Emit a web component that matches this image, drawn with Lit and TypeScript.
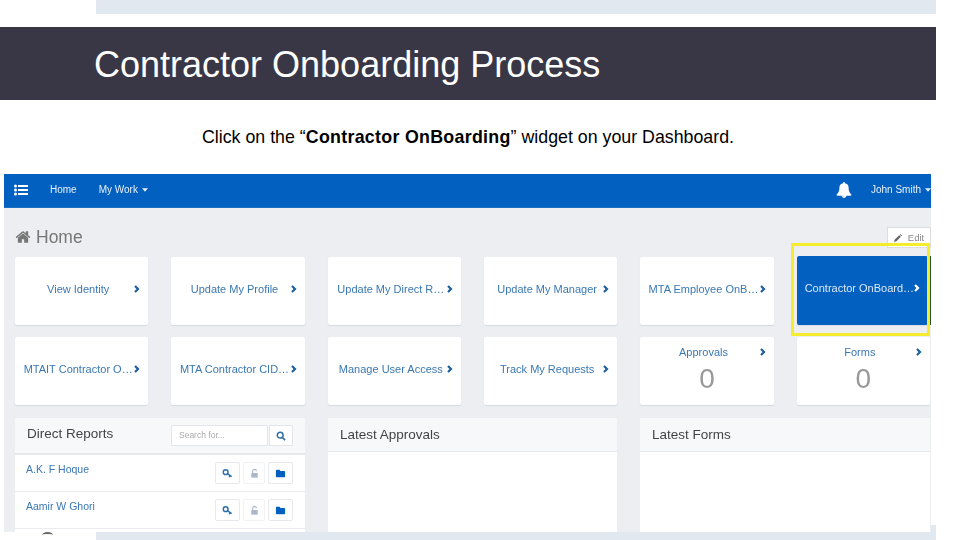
import { LitElement, html, css, svg } from "lit";
import { customElement } from "lit/decorators.js";

const HOME = "M1472 992v480q0 26-19 45t-45 19h-384v-384h-256v384h-384q-26 0-45-19t-19-45v-480q0-1 .5-3t.5-3l575-474 575 474q1 2 1 6zm223-69l-62 74q-8 9-21 11h-3q-13 0-21-7l-692-577-692 577q-12 8-24 7-13-2-21-11l-62-74q-8-10-7-23.5t11-21.5l719-599q32-26 76-26t76 26l244 204v-195q0-14 9-23t23-9h192q14 0 23 9t9 23v408l219 182q10 8 11 21.5t-7 23.5z";
const BELL = "M912 1696q0-16-16-16-59 0-101.5-42.5t-42.5-101.5q0-16-16-16t-16 16q0 73 51.5 124.5t124.5 51.5q16 0 16-16zm816-288q0 52-38 90t-90 38h-448q0 106-75 181t-181 75-181-75-75-181h-448q-52 0-90-38t-38-90q50-42 91-88t85-119.5 74.5-158.5 50-206 19.5-260q0-152 117-282.5t307-158.5q-8-19-8-39 0-40 28-68t68-28 68 28 28 68q0 20-8 39 190 28 307 158.5t117 282.5q0 139 19.5 260t50 206 74.5 158.5 85 119.5 91 88z";

const chevron = svg`<svg class="chev" viewBox="0 0 7 10"><path d="M2 2 L5 5 L2 8" fill="none" stroke="currentColor" stroke-width="2.2"/></svg>`;
const caret = svg`<svg class="caret" viewBox="0 0 7 4"><path d="M0 0 H7 L3.5 4 Z" fill="currentColor"/></svg>`;

const row1 = ["View Identity", "Update My Profile", "Update My Direct R…", "Update My Manager", "MTA Employee OnB…"];
const row2 = ["MTAIT Contractor O…", "MTA Contractor CID…", "Manage User Access", "Track My Requests"];
const reports = ["A.K. F Hoque", "Aamir W Ghori"];

@customElement("app-root")
export class AppRoot extends LitElement {
  static styles = css`
    :host {
      display: block;
      width: 960px;
      height: 540px;
      overflow: hidden;
      background: #fff;
      font-family: "Liberation Sans", Arial, sans-serif;
    }
    .strip-top {
      height: 14px;
      margin: 0 24px 13px 96px;
      background: #e2e8f0;
    }
    .title {
      width: 936px;
      height: 73px;
      box-sizing: border-box;
      padding-left: 94px;
      background: #393745;
      color: #fff;
      font-size: 36px;
      line-height: 76px;
    }
    .lead {
      width: 936px;
      margin-top: 26px;
      height: 22px;
      line-height: 22px;
      text-align: center;
      font-size: 17.8px;
      color: #000;
    }
    .lead b {
      letter-spacing: 0.3px;
    }
    .shot {
      position: relative;
      z-index: 1;
      width: 927px;
      height: 358px;
      margin: 26px 0 0 4px;
      overflow: hidden;
      background: #eceef2;
      font-family: "Liberation Sans", sans-serif;
      filter: blur(0.4px);
    }
    .strip-bottom {
      height: 15px;
      margin: -7px 24px 0 96px;
      background: #e2e8f0;
    }
    nav {
      display: flex;
      align-items: center;
      height: 34px;
      padding: 0 0 2px 10px;
      box-sizing: border-box;
      background: #0160c0;
      border-bottom: 1px solid #1a6fc4;
      color: #e8f0fa;
      font-size: 10px;
    }
    nav .list {
      width: 14px;
      height: 12px;
      margin-right: 22px;
    }
    nav .item {
      margin-right: 22px;
    }
    nav .spacer {
      flex: 1;
    }
    nav .bell {
      width: 16px;
      height: 16px;
      margin-right: 19px;
      fill: #fff;
    }
    .caret {
      width: 6px;
      height: 4px;
      margin-left: 4px;
      vertical-align: 1px;
    }
    .head {
      display: flex;
      justify-content: space-between;
      height: 49px;
      padding: 0 0 0 11px;
    }
    .head h1 {
      margin: 19px 0 0;
      display: flex;
      align-items: center;
      height: 20px;
      font-size: 17.5px;
      font-weight: 400;
      color: #777;
    }
    .head h1 svg {
      width: 16px;
      height: 16px;
      margin-right: 5px;
      fill: #777;
    }
    .edit {
      display: flex;
      align-items: center;
      justify-content: center;
      gap: 6px;
      box-sizing: border-box;
      width: 44px;
      height: 21px;
      margin: 19px 0 0;
      background: #fff;
      border: 1px solid #ddd;
      color: #888;
      font-size: 9.5px;
    }
    .edit svg {
      width: 8px;
      height: 8px;
      fill: #666;
    }
    .grid {
      display: grid;
      grid-template-columns: repeat(6, 1fr);
      column-gap: 23px;
      padding: 0 1px 0 11px;
    }
    .tiles {
      grid-auto-rows: 68px;
      row-gap: 12px;
    }
    .tile {
      display: flex;
      align-items: center;
      min-width: 0;
      padding: 0 8px 5px;
      background: #fff;
      border-radius: 2px;
      box-shadow: 0 1px 1px #d6d9de;
      color: #3a78b4;
      font-size: 11px;
    }
    .label {
      flex: 1;
      min-width: 0;
      text-align: center;
      white-space: nowrap;
    }
    .chev {
      flex: none;
      width: 7px;
      height: 10px;
      color: #1f5f9e;
    }
    .tile.active {
      margin: -1px 2px 0 0;
      background: #0160c0;
      color: #dce9f7;
    }
    .tile.active .chev {
      color: #fff;
    }
    .stat {
      display: block;
      padding: 9px 8px 0;
    }
    .stat .top {
      display: flex;
      align-items: center;
    }
    .stat .num {
      text-align: center;
      margin-top: 6px;
      font-size: 28px;
      line-height: 30px;
      color: #999;
    }
    .panels {
      display: grid;
      grid-template-columns: 290px 289px 1fr;
      column-gap: 23px;
      padding: 13px 1px 0 11px;
    }
    .panel {
      height: 130px;
      background: #fff;
    }
    .panel header {
      display: flex;
      align-items: center;
      justify-content: space-between;
      box-sizing: border-box;
      height: 34px;
      padding: 0 12px;
      background: #f7f8fa;
      border-bottom: 1px solid #e6e8ec;
      color: #444;
      font-size: 13.5px;
    }
    .panel header.tall {
      height: 37px;
      padding-bottom: 4px;
      border-bottom-width: 2px;
    }
    .search {
      display: flex;
      gap: 1px;
      margin-top: 4px;
    }
    .search span {
      box-sizing: border-box;
      width: 97px;
      height: 21px;
      padding-left: 7px;
      background: #fff;
      border: 1px solid #e3e5e9;
      color: #aaa;
      font-size: 8.5px;
      line-height: 19px;
    }
    .search button {
      display: flex;
      align-items: center;
      justify-content: center;
      box-sizing: border-box;
      width: 24px;
      height: 21px;
      padding: 0;
      background: #fff;
      border: 1px solid #e3e5e9;
    }
    .search svg {
      width: 10px;
      height: 10px;
    }
    .row {
      display: flex;
      justify-content: space-between;
      box-sizing: border-box;
      height: 37px;
      padding: 7px 12px 0 11px;
      border-bottom: 1px solid #e9ebee;
      color: #3a78b4;
      font-size: 10.5px;
    }
    .row .name {
      line-height: 14px;
    }
    .actions {
      display: flex;
      gap: 3px;
    }
    .actions span {
      display: flex;
      align-items: center;
      justify-content: center;
      box-sizing: border-box;
      width: 25px;
      height: 22px;
      background: #fff;
      border: 1px solid #e6e8ec;
      border-radius: 2px;
    }
    .actions span.off {
      width: 22px;
      border-color: #f1f2f4;
    }
    .actions svg {
      width: 11px;
      height: 11px;
    }
    .highlight {
      position: absolute;
      left: 787px;
      top: 69px;
      width: 139px;
      height: 93px;
      box-sizing: border-box;
      border: 3px solid #f5ec2e;
    }
    .edge {
      position: absolute;
      right: 0;
      top: 82px;
      width: 2px;
      height: 69px;
      background: #22582f;
    }
    .arc {
      position: absolute;
      left: 42px;
      top: 532px;
      width: 11px;
      height: 4px;
      border-top: 2px solid #666;
      border-radius: 50%;
    }
  `;

  tile(text: string, active = false) {
    return html`<div class="tile ${active ? "active" : ""}"><span class="label">${text}</span>${chevron}</div>`;
  }

  stat(text: string) {
    return html`<div class="tile stat"><div class="top"><span class="label">${text}</span>${chevron}</div><div class="num">0</div></div>`;
  }

  report(name: string) {
    return html`<div class="row">
      <span class="name">${name}</span>
      <div class="actions">
        <span><svg viewBox="0 0 12 12"><circle cx="4" cy="4.5" r="2.6" fill="none" stroke="#2f6fa8" stroke-width="1.6"/><path d="M6 6.2 L10.5 9.5 M8.6 8 L8 10" fill="none" stroke="#2f6fa8" stroke-width="1.6"/></svg></span>
        <span class="off"><svg viewBox="0 0 12 12"><rect x="2.5" y="5.5" width="7" height="5" fill="#a9b8c8"/><path d="M4 5.5 V3.5 A2 2 0 0 1 8 3.5" fill="none" stroke="#a9b8c8" stroke-width="1.2"/></svg></span>
        <span><svg viewBox="0 0 12 12"><path d="M1 3 Q1 2 2 2 H5 L6 3.2 H10 Q11 3.2 11 4.2 V9 Q11 10 10 10 H2 Q1 10 1 9 Z" fill="#0160c0"/></svg></span>
      </div>
    </div>`;
  }

  render() {
    return html`
      <div class="strip-top"></div>
      <div class="title">Contractor Onboarding Process</div>
      <div class="lead">Click on the “<b>Contractor OnBoarding</b>” widget on your Dashboard.</div>
      <div class="shot">
        <nav>
          <svg class="list" viewBox="0 0 14 12" fill="#fff">
            <circle cx="1.5" cy="2" r="1.5"/><circle cx="1.5" cy="6" r="1.5"/><circle cx="1.5" cy="10" r="1.5"/>
            <rect x="4" y="1" width="10" height="2"/><rect x="4" y="5" width="10" height="2"/><rect x="4" y="9" width="10" height="2"/>
          </svg>
          <span class="item">Home</span>
          <span class="item">My Work${caret}</span>
          <span class="spacer"></span>
          <svg class="bell" viewBox="0 0 1792 1792"><path d=${BELL}/></svg>
          <span>John Smith${caret}</span>
        </nav>
        <div class="head">
          <h1><svg viewBox="0 0 1792 1792"><path d=${HOME}/></svg>Home</h1>
          <div class="edit">
            <svg viewBox="0 0 10 10"><path d="M0 10 L1 7 L6.5 1.5 L8.5 3.5 L3 9 Z M7.2 .8 L8 0 L10 2 L9.2 2.8 Z"/></svg>
            Edit
          </div>
        </div>
        <div class="grid tiles">
          ${row1.map((t) => this.tile(t))}
          ${this.tile("Contractor OnBoard…", true)}
          ${row2.map((t) => this.tile(t))}
          ${this.stat("Approvals")}
          ${this.stat("Forms")}
        </div>
        <div class="panels">
          <section class="panel">
            <header class="tall">
              <span>Direct Reports</span>
              <div class="search">
                <span>Search for...</span>
                <button><svg viewBox="0 0 12 12"><circle cx="5" cy="5" r="3.5" fill="none" stroke="#2f6fa8" stroke-width="1.8"/><path d="M7.5 7.5 L11 11" stroke="#2f6fa8" stroke-width="2"/></svg></button>
              </div>
            </header>
            ${reports.map((r) => this.report(r))}
          </section>
          <section class="panel"><header><span>Latest Approvals</span></header></section>
          <section class="panel"><header><span>Latest Forms</span></header></section>
        </div>
        <div class="edge"></div>
        <div class="highlight"></div>
      </div>
      <div class="strip-bottom"></div>
      <div class="arc"></div>
    `;
  }
}
